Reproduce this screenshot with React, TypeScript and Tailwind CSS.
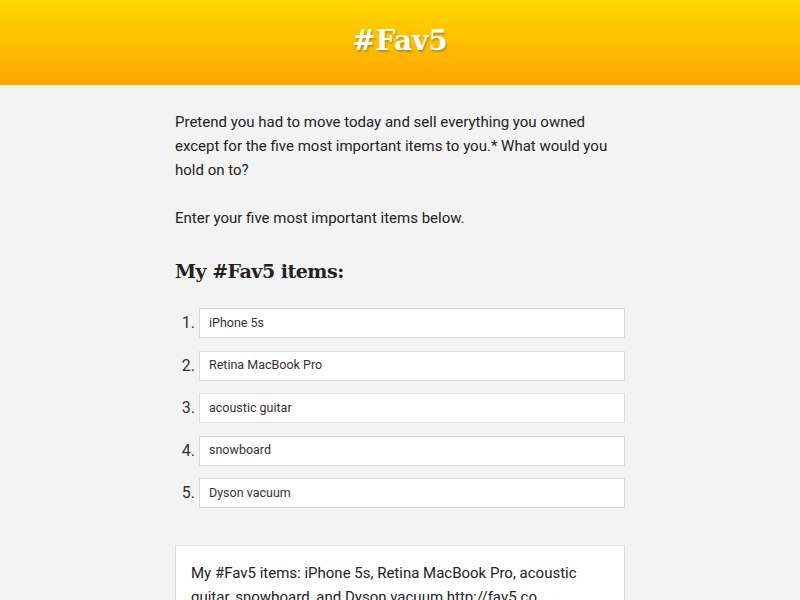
import React from "react";

const items = ["iPhone 5s", "Retina MacBook Pro", "acoustic guitar", "snowboard", "Dyson vacuum"];

export default function App() {
  return (
    <div className="min-h-[600px] bg-[#f3f3f3] text-[#222] font-['Roboto','Liberation_Sans',sans-serif]">
      <header className="h-[85px] bg-gradient-to-b from-[#ffd800] to-[#ffa400] flex items-center justify-center">
        <h1 className="text-white font-bold text-[28px] font-['DejaVu_Serif','Liberation_Serif',serif] [text-shadow:1px_2px_2px_rgba(0,0,0,0.25)] mt-[-3px]">
          #Fav5
        </h1>
      </header>
      <main className="w-[450px] mx-auto pt-[25px]">
        <p className="text-[15px] leading-[24px]">
          Pretend you had to move today and sell everything you owned except for the five most important items to you.* What would you hold on to?
        </p>
        <p className="text-[15px] leading-[24px] mt-[24px]">Enter your five most important items below.</p>
        <h2 className="mt-[26px] text-[19px] font-bold text-[#222] font-['DejaVu_Serif','Liberation_Serif',serif] leading-[30px] tracking-[-0.5px]">
          My #Fav5 items:
        </h2>
        <ol className="mt-[22px] flex flex-col gap-[12.5px]">
          {items.map((it, i) => (
            <li key={i} className="flex items-center">
              <span className="w-[24px] text-right pr-[4px] text-[16px] text-[#333]">{i + 1}.</span>
              <div className="flex-1 h-[30px] bg-white border border-[#dcdcdc] flex items-center pl-[9px] text-[12.5px] text-[#333]">
                {it}
              </div>
            </li>
          ))}
        </ol>
        <div className="mt-[37px] bg-white border border-[#dcdcdc] px-[15px] pt-[15px] pb-[16px] text-[15px] leading-[24px]">
          My #Fav5 items: iPhone 5s, Retina MacBook Pro, acoustic guitar, snowboard, and Dyson vacuum http://fav5.co
        </div>
      </main>
    </div>
  );
}
